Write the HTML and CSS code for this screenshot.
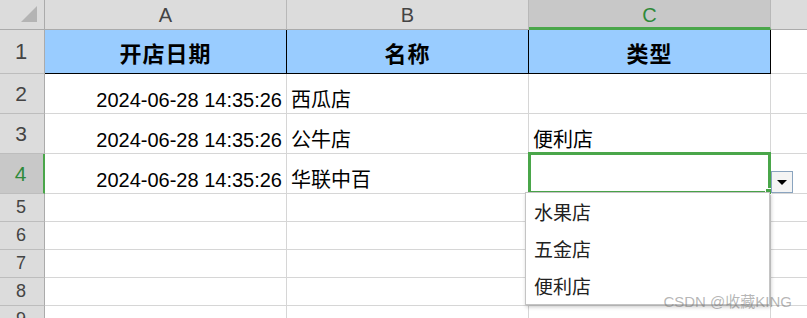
FILE: index.html
```html
<!DOCTYPE html>
<html lang="zh-CN">
<head>
    <meta charset="UTF-8">
    <title>开店信息</title>
    <link rel="stylesheet" href="styles.css">
</head>
<body>
    <div class="sheet">
        <div class="corner"><span class="corner-mark"></span></div>
        <div class="col-head">A</div>
        <div class="col-head">B</div>
        <div class="col-head active">C</div>
        <div class="col-head last"></div>

        <div class="row-head tall">1</div>
        <div class="cell title">开店日期</div>
        <div class="cell title">名称</div>
        <div class="cell title">类型</div>
        <div class="cell last"></div>

        <div class="row-head">2</div>
        <div class="cell date">2024-06-28 14:35:26</div>
        <div class="cell text">西瓜店</div>
        <div class="cell text"></div>
        <div class="cell last"></div>

        <div class="row-head">3</div>
        <div class="cell date">2024-06-28 14:35:26</div>
        <div class="cell text">公牛店</div>
        <div class="cell text">便利店</div>
        <div class="cell last"></div>

        <div class="row-head active">4</div>
        <div class="cell date">2024-06-28 14:35:26</div>
        <div class="cell text">华联中百</div>
        <div class="cell text"></div>
        <div class="cell last"></div>

        <div class="row-head small">5</div>
        <div class="cell"></div><div class="cell"></div><div class="cell"></div><div class="cell last"></div>
        <div class="row-head small">6</div>
        <div class="cell"></div><div class="cell"></div><div class="cell"></div><div class="cell last"></div>
        <div class="row-head small">7</div>
        <div class="cell"></div><div class="cell"></div><div class="cell"></div><div class="cell last"></div>
        <div class="row-head small">8</div>
        <div class="cell"></div><div class="cell"></div><div class="cell"></div><div class="cell last"></div>
        <div class="row-head small">9</div>
        <div class="cell"></div><div class="cell"></div><div class="cell"></div><div class="cell last"></div>

        <div class="selection"><span class="fill-handle"></span></div>
        <div class="drop-btn"><span class="drop-arrow"></span></div>
        <ul class="drop-list">
            <li>水果店</li>
            <li>五金店</li>
            <li>便利店</li>
        </ul>
        <div class="watermark">CSDN @收藏KING</div>
    </div>
</body>
</html>
```

FILE: styles.css
```css
body {
    margin: 0;
    background: #fff;
    overflow: hidden;
    font-family: "Liberation Sans", "Noto Sans CJK SC", sans-serif;
}

.sheet {
    position: relative;
    display: grid;
    grid-template-columns: 45px 242px 242px 242px 1fr;
    grid-template-rows: 30px 44px 40px 40px 40px 28px 28px 28px 28px 28px;
    width: 807px;
}

.sheet > div {
    box-sizing: border-box;
}

.corner {
    background: #dcdcdc;
    border-right: 1px solid #ababab;
    border-bottom: 1px solid #ababab;
    display: flex;
    justify-content: flex-end;
    align-items: flex-end;
    padding: 0 7px 7px 0;
}

.corner-mark {
    width: 16px;
    height: 16px;
    background: #b4b4b4;
    clip-path: polygon(100% 0, 100% 100%, 0 100%);
}

.col-head {
    background: #dcdcdc;
    border-right: 1px solid #b8b8b8;
    border-bottom: 1px solid #ababab;
    color: #444;
    font-size: 20px;
    display: flex;
    justify-content: center;
    align-items: center;
    padding-top: 1px;
}

.col-head.active {
    background: #c8c8c8;
    color: #2f8a3a;
    border-bottom: 3px solid #4aa64a;
    padding-top: 3px;
}

.col-head.last {
    border-right: none;
}

.row-head {
    background: #dcdcdc;
    border-right: 1px solid #ababab;
    border-bottom: 1px solid #bdbdbd;
    color: #444;
    font-size: 21px;
    display: flex;
    justify-content: center;
    align-items: center;
    padding-right: 2px;
}

.row-head.tall {
    font-size: 22px;
}

.row-head.small {
    font-size: 18px;
}

.row-head.active {
    background: #c8c8c8;
    color: #2f8a3a;
    border-right: 2px solid #4aa64a;
}

.cell {
    border-right: 1px solid #d6d6d6;
    border-bottom: 1px solid #d6d6d6;
    display: flex;
    align-items: flex-end;
    padding: 0 4px 4px;
    white-space: nowrap;
    color: #000;
}

.cell.last {
    border-right: none;
}

.title {
    background: #99ccff;
    border-right-color: #000;
    border-bottom-color: #000;
    justify-content: center;
    align-items: center;
    padding: 1px 0 0;
    font-family: "Noto Sans CJK SC", sans-serif;
    font-weight: bold;
    font-size: 22px;
    letter-spacing: 1px;
}

.date {
    justify-content: flex-end;
    font-size: 20px;
    padding-bottom: 1px;
}

.text {
    font-family: "Noto Sans CJK SC", sans-serif;
    font-size: 20px;
    padding-bottom: 0;
}

.selection {
    position: absolute;
    left: 528px;
    top: 152px;
    width: 243px;
    height: 42px;
    border: 3px solid #4aa64a;
    box-sizing: border-box;
}

.fill-handle {
    position: absolute;
    right: -4px;
    bottom: -4px;
    width: 5px;
    height: 5px;
    background: #4aa64a;
    border: 1px solid #fff;
}

.drop-btn {
    position: absolute;
    left: 771px;
    top: 171px;
    width: 22px;
    height: 22px;
    background: #f4f4f4;
    border: 1px solid #8aa4bf;
    display: flex;
    justify-content: center;
    align-items: center;
}

.drop-arrow {
    width: 0;
    height: 0;
    border-left: 5px solid transparent;
    border-right: 5px solid transparent;
    border-top: 5px solid #000;
    margin-top: 1px;
}

.drop-list {
    position: absolute;
    left: 525px;
    top: 192px;
    width: 245px;
    height: 113px;
    margin: 0;
    padding: 0;
    list-style: none;
    background: #fff;
    border: 1px solid #c4c4c4;
    box-shadow: 1px 2px 4px rgba(0, 0, 0, 0.22);
    box-sizing: border-box;
}

.drop-list li {
    height: 37px;
    line-height: 37px;
    padding-left: 8px;
    font-family: "Noto Sans CJK SC", sans-serif;
    font-size: 19px;
    color: #222;
}

.watermark {
    position: absolute;
    right: 15px;
    top: 290px;
    font-family: "Liberation Sans", "Noto Sans CJK SC", sans-serif;
    font-size: 15px;
    color: rgba(120, 120, 120, 0.55);
    white-space: nowrap;
}
```
